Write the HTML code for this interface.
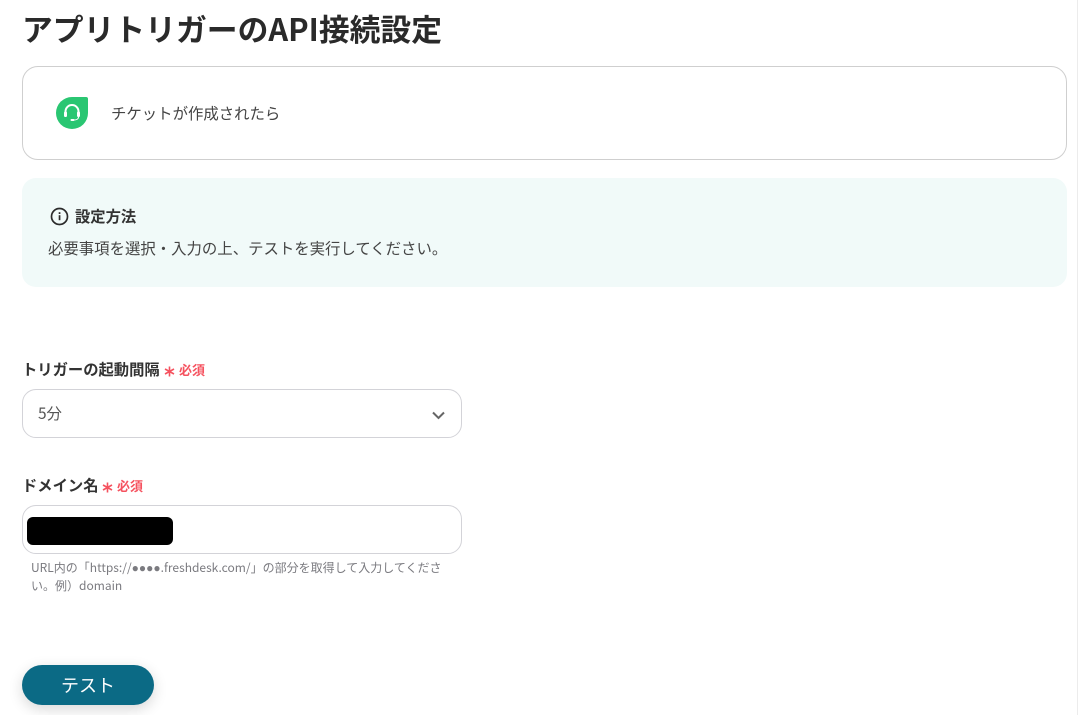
<!DOCTYPE html>
<html lang="ja">
<head>
<meta charset="utf-8">
<title>アプリトリガーのAPI接続設定</title>
<style>
html,body{margin:0;padding:0;background:#fff;}
body{width:1078px;height:715px;position:relative;overflow:hidden;font-family:"Liberation Sans","Noto Sans CJK JP",sans-serif;color:#333;}
body *{font-family:"Noto Sans CJK JP","Liberation Sans",sans-serif;}
.a{position:absolute;white-space:nowrap;}
.req{color:#f5525f;font-weight:700;font-size:13px;line-height:16px;}
.lbl{font-size:15.3px;line-height:20px;font-weight:700;color:#333;}
.d{font-family:"Liberation Sans",sans-serif;}
</style>
</head>
<body>
<div class="a" style="left:1077px;top:0;width:1px;height:715px;background:#ececec"></div>
<div class="a" style="left:22px;top:6px;font-size:30.8px;line-height:44px;font-weight:700;color:#2a2a2a">アプリトリガーのAPI接続設定</div>

<div class="a" style="left:22px;top:66px;width:1043px;height:92px;border:1px solid #cfcfcf;border-radius:16px;background:#fff"></div>
<svg class="a" style="left:55px;top:96px" width="34" height="34" viewBox="0 0 34 34">
<path d="M17 1H31a2 2 0 0 1 2 2V17A16 16 0 0 1 1 17A16 16 0 0 1 17 1Z" fill="#2ac672"/>
<g transform="translate(0 -1)">
<path d="M10.5 20V16.5a6.5 6.5 0 0 1 13 0V20" fill="none" stroke="#fff" stroke-width="2"/>
<rect x="9" y="16.5" width="3" height="5.5" rx="1.4" fill="#fff"/>
<rect x="22" y="16.5" width="3" height="5.5" rx="1.4" fill="#fff"/>
<path d="M23.5 22c0 2-2 3-4.5 3" fill="none" stroke="#fff" stroke-width="1"/>
<rect x="15.5" y="24" width="4" height="2" rx="1" fill="#fff"/>
</g>
</svg>
<div class="a" style="left:111px;top:102px;font-size:15.4px;line-height:22px;color:#444">チケットが作成されたら</div>

<div class="a" style="left:22px;top:178px;width:1045px;height:109px;background:#f1faf9;border-radius:14px"></div>
<svg class="a" style="left:50px;top:207px" width="19" height="19" viewBox="0 0 19 19">
<circle cx="9.5" cy="9.5" r="8" fill="none" stroke="#2b2b2b" stroke-width="1.7"/>
<rect x="8.7" y="8.2" width="1.7" height="5" fill="#2b2b2b"/>
<rect x="8.7" y="5.2" width="1.7" height="1.8" fill="#2b2b2b"/>
</svg>
<div class="a lbl" style="left:75px;top:206px">設定方法</div>
<div class="a" style="left:48px;top:238px;font-size:15.4px;line-height:21px;color:#444">必要事項を選択・入力の上、テストを実行してください。</div>

<div class="a lbl" style="left:22px;top:359px">トリガーの起動間隔</div>
<svg class="a" style="left:164px;top:366px" width="11" height="11" viewBox="0 0 11 11"><path d="M5.5 .5V10.5M1 3L10 8M10 3L1 8" stroke="#f5525f" stroke-width="1.6" fill="none"/></svg>
<div class="a req" style="left:179px;top:362px">必須</div>
<div class="a" style="left:22px;top:389px;width:438px;height:47px;border:1px solid #d3d3d8;border-radius:14px;background:#fff"></div>
<div class="a" style="left:38px;top:403px;font-size:15.4px;line-height:20px;color:#555">5分</div>
<svg class="a" style="left:431px;top:410px" width="15" height="11" viewBox="0 0 15 11"><path d="M2 2.5L7.5 8L13 2.5" fill="none" stroke="#666" stroke-width="2"/></svg>

<div class="a lbl" style="left:22px;top:475px">ドメイン名</div>
<svg class="a" style="left:102px;top:482px" width="11" height="11" viewBox="0 0 11 11"><path d="M5.5 .5V10.5M1 3L10 8M10 3L1 8" stroke="#f5525f" stroke-width="1.6" fill="none"/></svg>
<div class="a req" style="left:117px;top:478px">必須</div>
<div class="a" style="left:22px;top:505px;width:438px;height:47px;border:1px solid #d3d3d8;border-radius:14px;background:#fff"></div>
<div class="a" style="left:27px;top:517px;width:146px;height:28px;background:#000;border-radius:6px"></div>
<div class="a" style="left:31px;top:559px;font-size:12px;line-height:18px;color:#7b7b80">URL内の「https://<span class="d">●●●●</span>.freshdesk.com/」の部分を取得して入力してくださ</div>
<div class="a" style="left:31px;top:577px;font-size:12px;line-height:18px;color:#7b7b80">い。例）domain</div>

<div class="a" style="left:22px;top:665px;width:132px;height:40px;border-radius:20px;background:#0b6a85;box-shadow:0 4px 14px rgba(0,0,0,.16);color:#fff;font-size:18px;line-height:40px;text-align:center">テスト</div>
</body>
</html>
